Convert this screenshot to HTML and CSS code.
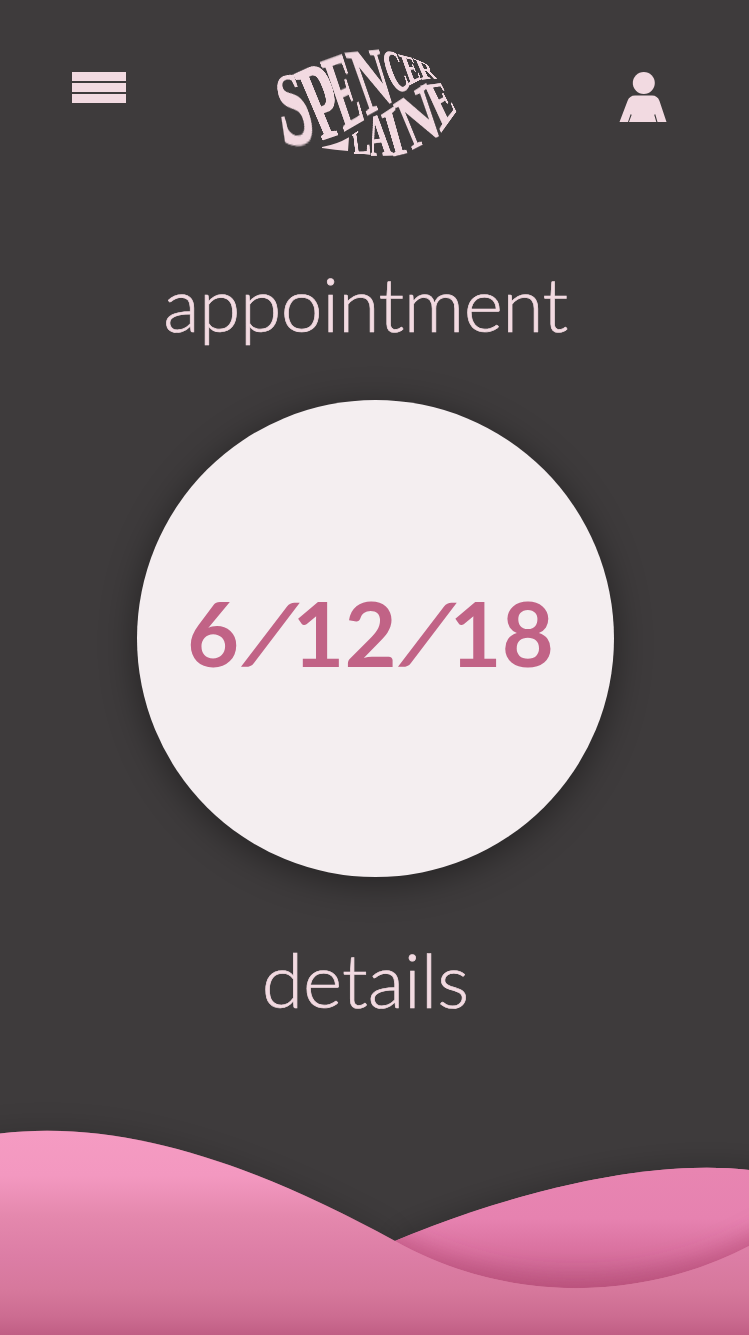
FILE: index.html
```html
<!DOCTYPE html>
<html lang="en">
<head>
<meta charset="utf-8">
<title>Spencer Laine – Appointment</title>
<link rel="stylesheet" href="styles.css">
</head>
<body>
<div class="screen">
  <header class="top">
    <button class="menu" aria-label="Menu"><span></span><span></span><span></span></button>
    <div class="logo">
      <svg class="logo-swash" viewBox="0 0 600 375" aria-hidden="true"><path d="M171 321Q215 314 252 292L249 333Q210 330 171 324Z"/></svg>
    </div>
    <svg class="user" viewBox="0 0 47 51" role="img" aria-label="Account">
      <circle cx="23.800" cy="11" r="11"/>
      <path d="M-.5 50L7.500 29Q9.500 23.500 15 23.500H32Q37.500 23.500 39.500 29L46.500 50H37.500L35.300 42.300L34.200 42.700L36.300 50H9L11.700 42.700L10.600 42.300L8 50Z"/>
    </svg>
  </header>
  <main class="content">
    <h1 class="title">appointment</h1>
    <div class="date"><div>6<span class="slash">/</span>12<span class="slash">/</span>18</div></div>
    <h2 class="details">details</h2>
  </main>
  <svg class="waves" viewBox="0 1085 749 250" aria-hidden="true">
    <defs>
      <linearGradient id="front" gradientUnits="userSpaceOnUse" x1="0" y1="1131" x2="0" y2="1335">
        <stop offset="0" stop-color="#f59bc2"/>
        <stop offset=".22" stop-color="#f398c0"/>
        <stop offset=".42" stop-color="#e488ad"/>
        <stop offset=".62" stop-color="#dc7da5"/>
        <stop offset=".78" stop-color="#d6789c"/>
        <stop offset=".91" stop-color="#cc6c91"/>
        <stop offset="1" stop-color="#c05e84"/>
      </linearGradient>
      <linearGradient id="back" gradientUnits="userSpaceOnUse" x1="0" y1="1168" x2="0" y2="1288">
        <stop offset="0" stop-color="#e885b1"/>
        <stop offset=".42" stop-color="#e682b0"/>
        <stop offset=".7" stop-color="#d9719f"/>
        <stop offset=".88" stop-color="#ca6490"/>
        <stop offset="1" stop-color="#c25c86"/>
      </linearGradient>
      <filter id="shade" filterUnits="userSpaceOnUse" x="-60" y="1060" width="870" height="340">
        <feDropShadow dx="0" dy="-4" stdDeviation="14" flood-color="#000" flood-opacity=".2"/>
      </filter>
      <filter id="rose" filterUnits="userSpaceOnUse" x="-60" y="1060" width="870" height="340">
        <feDropShadow dx="0" dy="-10" stdDeviation="10" flood-color="#b0446f" flood-opacity=".5"/>
      </filter>
      <clipPath id="back-area"><path d="M395 1241C500 1197 640 1158 749 1170V1335H395Z"/></clipPath>
    </defs>
    <path filter="url(#shade)" fill="url(#back)" d="M395 1241C500 1197 640 1158 749 1170L790 1176V1390H395Z"/>
    <path filter="url(#shade)" opacity=".7" fill="#d6789c" d="M-50 1139.500L0 1133.500C130 1118 265 1170 395 1241V1390H-50Z"/>
    <path fill="url(#back)" d="M395 1241C500 1197 640 1158 749 1170V1335H395Z"/>
    <g clip-path="url(#back-area)"><path filter="url(#rose)" fill="#d6789c" d="M300 1190L395 1241C505 1303 640 1303 749 1246L800 1220V1390H300Z"/></g>
    <path fill="url(#front)" d="M0 1133.500C130 1118 265 1170 395 1241C505 1303 640 1303 749 1246V1335H0Z"/>
  </svg>
</div>
<script src="logo.js"></script>
</body>
</html>
```
FILE: logo.js
```js
// Each letter of the wordmark with its corners: top-left, top-right,
// bottom-right, bottom-left, on a 600 x 375 grid.
const letters = [
  ["S", 26, 116, 96, 98, 166, 294, 52, 312],
  ["P", 84, 104, 176, 62, 252, 272, 170, 300],
  ["E", 163, 66, 240, 38, 302, 235, 236, 273],
  ["N", 236, 38, 342, 28, 388, 180, 304, 225],
  ["C", 340, 32, 397, 36, 439, 140, 386, 165],
  ["E", 398, 42, 445, 54, 470, 116, 430, 136],
  ["R", 443, 54, 492, 74, 515, 115, 468, 118],
  ["L", 260, 285, 306, 254, 324, 343, 266, 340],
  ["A", 302, 240, 364, 216, 384, 345, 318, 347],
  ["I", 345, 226, 392, 195, 430, 336, 382, 348],
  ["N", 382, 194, 484, 128, 533, 280, 440, 328],
  ["E", 464, 137, 533, 128, 576, 210, 526, 278]
];
const logo = document.querySelector(".logo");
for (const [char, ...corners] of letters) {
  const el = document.createElement("span");
  el.className = "letter";
  el.textContent = char;
  logo.append(el);
  const w = el.offsetWidth, h = el.offsetHeight;
  const [x0, y0, x1, y1, x2, y2, x3, y3] = corners.map(v => v / 3);
  const dx1 = x1 - x2, dx2 = x3 - x2, sx = x0 - x1 + x2 - x3;
  const dy1 = y1 - y2, dy2 = y3 - y2, sy = y0 - y1 + y2 - y3;
  const den = dx1 * dy2 - dx2 * dy1;
  const g = (sx * dy2 - dx2 * sy) / den;
  const k = (dx1 * sy - sx * dy1) / den;
  const m = [
    (x1 - x0 + g * x1) / w, (y1 - y0 + g * y1) / w, 0, g / w,
    (x3 - x0 + k * x3) / h, (y3 - y0 + k * y3) / h, 0, k / h,
    0, 0, 1, 0,
    x0, y0, 0, 1
  ];
  el.style.transform = `matrix3d(${m.map(v => v.toFixed(8)).join(",")})`;
}
```
FILE: styles.css
```css
* { box-sizing: border-box; }
body { margin: 0; background: #3e3b3c; }
.screen {
  height: 1335px;
  overflow: hidden;
  display: flex;
  flex-direction: column;
  background: #3e3b3c;
  color: #f2dae1;
  font-family: Lato, "Open Sans", sans-serif;
}
.top {
  display: grid;
  grid-template-columns: 193px 200px 1fr;
  align-items: start;
  height: 165px;
  padding: 40px 82px 0 72px;
}
.menu {
  display: grid;
  gap: 2px;
  width: 54px;
  margin-top: 32px;
  padding: 0;
  border: 0;
  background: none;
}
.menu span { height: 9px; background: #f2dae1; }
.logo {
  position: relative;
  width: 200px;
  height: 125px;
  font-family: "Liberation Serif", serif;
  font-size: 100px;
  font-weight: 700;
  line-height: 66px;
}
.letter {
  position: absolute;
  left: 0;
  top: 0;
  transform-origin: 0 0;
  -webkit-text-stroke: 1.5px #f2dae1;
}
.logo-swash { display: block; width: 200px; height: 125px; fill: #f2dae1; }
.user {
  width: 47px;
  height: 51px;
  margin-top: 32px;
  justify-self: end;
  overflow: visible;
  fill: #f2dae1;
}
.content {
  flex: 1;
  display: flex;
  flex-direction: column;
  align-items: center;
}
.title, .details {
  margin: 0;
  font-weight: 300;
  font-size: 75px;
  line-height: 90px;
  white-space: nowrap;
  -webkit-text-stroke: .7px #f2dae1;
}
.title { margin-top: 93px; padding-right: 18px; letter-spacing: -.5px; }
.date {
  display: grid;
  place-items: center;
  width: 477px;
  height: 477px;
  margin: 52px 0 0 2px;
  padding: 0 10px 13px 0;
  border-radius: 50%;
  background: #f4eef0;
  color: #c16386;
  box-shadow: 0 6px 36px rgba(0, 0, 0, .42);
  font-weight: 700;
  font-size: 90px;
  line-height: 1;
}
.slash {
  display: inline-block;
  margin: 0 5.5px;
  transform: translate(2px, -2px) skewX(-16deg) scale(1.1, .9);
  transform-origin: 50% 65%;
}
.details { margin-top: 57px; padding-right: 18px; }
.waves { display: block; width: 749px; height: 250px; flex: none; }
```
